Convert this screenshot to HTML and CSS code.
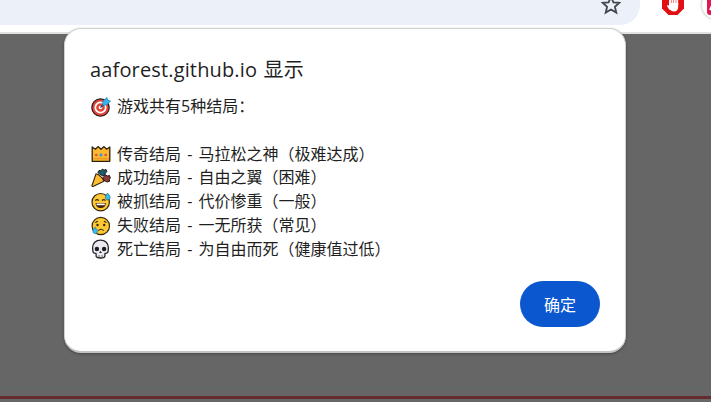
FILE: index.html
```html
<!DOCTYPE html>
<html lang="zh-CN">

<head>
    <meta charset="UTF-8">
    <meta name="viewport" content="width=device-width, initial-scale=1.0">
    <title>aaforest.github.io</title>
    <link rel="stylesheet" href="styles.css">
</head>

<body>
    <div class="toolbar">
        <div class="address-bar">
            <svg class="star" viewBox="0 0 20 20">
                <path d="M10 1.800l2.400 5.500 6 .5-4.500 3.900 1.400 5.900L10 14.500l-5.300 3.100 1.400-5.900L1.600 7.800l6-.5z" />
            </svg>
        </div>
        <svg class="ext-stop" viewBox="0 0 22 22">
            <path fill="#e20f12" d="M6.500 0h9L22 6.500v9L15.500 22h-9L0 15.500v-9z" />
            <path fill="none" stroke="#fff" stroke-width="1.900" stroke-linecap="round" d="M8 12V6M10.400 11V4.500M12.800 11V5M15.200 12V7M6 13l2 3" />
            <path fill="#fff" d="M7 10h9.200v4c0 2.500-1.500 4.500-4.200 4.500-2.200 0-3.500-1-5-3.500z" />
        </svg>
        <div class="ext-badge">
            <svg viewBox="0 0 20 20">
                <rect width="20" height="20" rx="3" fill="#e3174f" />
                <path d="M3 15L8 4l5 11M5 11h6" fill="none" stroke="#fff" stroke-width="2" />
            </svg>
        </div>
    </div>

    <div class="page">
        <div class="page-edge"></div>
        <div class="page-line"></div>
    </div>

    <div class="dialog">
        <h1>aaforest.github.io <span>显示</span></h1>
        <div class="message">
            <p>
                <svg viewBox="0 0 20 20">
                    <circle cx="9.500" cy="10.500" r="8.700" fill="#e0443a" stroke="#2b1a18" stroke-width="1.200" />
                    <circle cx="9.500" cy="10.500" r="5.200" fill="none" stroke="#fff" stroke-width="1.700" />
                    <circle cx="9.500" cy="10.500" r="1.800" fill="#fff" />
                    <path d="M9.500 10.500l5-5" stroke="#1d3c50" stroke-width="1.200" />
                    <path d="M11.500 8.500l.3-4.500L16 .6l.8 2.400 2.700.9-3.500 4z" fill="#35b4ee" stroke="#186c98" stroke-width=".6" />
                </svg>
                <span>游戏共有5种结局：</span>
            </p>
            <p></p>
            <p>
                <svg viewBox="0 0 20 20">
                    <path d="M1.200 17.300V3l3.200 2.200L7 2.600l3 2.600 3-2.600 2.600 2.600L18.800 3v14.300z" fill="#fcb82e" stroke="#2e210d" stroke-width="1.300" stroke-linejoin="round" />
                    <path d="M2 14.800h16" stroke="#e58b20" stroke-width="1" />
                    <circle cx="5.300" cy="11" r="1.300" fill="#e8483f" />
                    <path d="M10 8.900l1.800 2.100-1.800 2.100L8.200 11z" fill="#2f9ce0" />
                    <circle cx="14.700" cy="11" r="1.300" fill="#e8483f" />
                </svg>
                <span>传奇结局 - 马拉松之神（极难达成）</span>
            </p>
            <p>
                <svg viewBox="0 0 20 20">
                    <path d="M8.500 6l-1.700-1.500L8 2.500l2 .3L11.500 1l1.500 1.200 2-.7.800 2.200-1.500 1.500L14 7l-2.500.8z" fill="#235d69" stroke="#151a1c" stroke-width="1" />
                    <path d="M12 9.500l2.500-2.500 2 1 2-.5.800 2.500-1 1.300.3 1.900-2.500.8-3.500-2z" fill="#913a38" stroke="#1d1213" stroke-width="1" />
                    <path d="M5 5.800c3 .8 6.900 4 8 7.500L2 18.400c-.7.300-1.200-.2-1-.9z" fill="#fdbd32" stroke="#35230c" stroke-width="1.100" />
                </svg>
                <span>成功结局 - 自由之翼（困难）</span>
            </p>
            <p>
                <svg viewBox="0 0 20 20">
                    <circle cx="9.700" cy="10.200" r="8.700" fill="#fdc834" stroke="#35270f" stroke-width="1.200" />
                    <path d="M4.300 8.700q1.800-2 3.500 0M11 8.700q1.800-2 3.500 0" fill="none" stroke="#39270e" stroke-width="1.200" />
                    <path d="M4.600 11h10.200c0 3-2 5-5.100 5s-5.100-2-5.100-5z" fill="#41240f" />
                    <path d="M5.600 11.500h8.200v1.700H5.600z" fill="#fff" />
                    <path d="M16.500 1c1.500 2 2.600 3.200 2.600 4.500 0 3-4.700 3-4.700 0 0-1.300 1-2.700 2.100-4.500z" fill="#36bdf4" stroke="#1a6c91" stroke-width=".7" />
                </svg>
                <span>被抓结局 - 代价惨重（一般）</span>
            </p>
            <p>
                <svg viewBox="0 0 20 20">
                    <circle cx="9.800" cy="10" r="8.700" fill="#fdc834" stroke="#35270f" stroke-width="1.200" />
                    <circle cx="6.500" cy="9" r="1.200" fill="#34240f" />
                    <circle cx="13.200" cy="9" r="1.200" fill="#34240f" />
                    <path d="M4.300 6.500l2.500-1.300M15.400 6.500l-2.500-1.300M7.200 14.700q2.700-2.800 5.400 0" fill="none" stroke="#34240f" stroke-width="1.100" />
                    <path d="M4.200 11c1.300 1.900 2.200 3 2.200 4.400 0 3-4.500 3-4.500 0 0-1.400 1-2.600 2.300-4.400z" fill="#36bdf4" stroke="#1a6c91" stroke-width=".6" />
                </svg>
                <span>失败结局 - 一无所获（常见）</span>
            </p>
            <p>
                <svg viewBox="0 0 20 20">
                    <path d="M9.500 1.200c4.800 0 7.900 3.200 7.900 7.500 0 2-.3 3.500-.5 4.500-.2 1-1.700 1.300-3 1.500v2.300c0 1.200-1.500 2-4.400 2s-4.400-.8-4.400-2v-2.300c-1.300-.2-2.800-.5-3-1.500-.2-1-.5-2.500-.5-4.500 0-4.300 3.100-7.500 7.900-7.500z" fill="#eceaf0" stroke="#242329" stroke-width="1.300" />
                    <circle cx="5.900" cy="10" r="2.200" fill="#1d1c22" />
                    <circle cx="13.100" cy="10" r="2.200" fill="#1d1c22" />
                    <path d="M9.500 11.800l1.400 2.200H8.100z" fill="#1d1c22" />
                    <path d="M8 16v2M11 16v2" stroke="#55535c" stroke-width=".8" />
                </svg>
                <span>死亡结局 - 为自由而死（健康值过低）</span>
            </p>
        </div>
        <div class="buttons">
            <button class="ok-button">确定</button>
        </div>
    </div>
</body>

</html>
```
FILE: styles.css
```css
* {
    box-sizing: border-box;
}

body {
    margin: 0;
    height: 402px;
    display: flex;
    flex-direction: column;
    overflow: hidden;
    background-color: #fff;
    font-family: "Open Sans", "Noto Sans CJK SC", sans-serif;
    color: #1f1f1f;
}

.toolbar {
    flex: none;
    display: flex;
    height: 34px;
    border-bottom: 2px solid #dfe2e1;
    overflow: hidden;
}

.address-bar {
    flex: none;
    display: flex;
    justify-content: flex-end;
    width: 640px;
    height: 25px;
    padding-right: 19px;
    background-color: #ebf0f9;
    border-bottom-right-radius: 20px;
}

.star {
    width: 20px;
    height: 20px;
    margin-top: -5px;
    fill: none;
    stroke: #44474b;
    stroke-width: 1.8;
}

.ext-stop {
    flex: none;
    width: 22px;
    height: 22px;
    margin: -7px 0 0 22px;
}

.ext-badge {
    flex: none;
    width: 28px;
    height: 28px;
    margin: -9px 0 0 18px;
    padding: 4px 5px;
    border-radius: 50%;
    background-color: #fff;
    box-shadow: 0 0 3px rgba(0, 0, 0, 0.4);
}

.ext-badge svg {
    display: block;
    width: 20px;
    height: 20px;
}

.page {
    flex: 1;
    display: flex;
    flex-direction: column;
    justify-content: flex-end;
    padding-bottom: 3px;
    background-color: #666;
}

.page-edge {
    height: 2px;
    margin-bottom: 6px;
    background-color: #60685f;
    background-color: #616966;
}

.page-line {
    height: 3px;
    background-color: #652c30;
}

/* alert box, lies over the toolbar and the page */
.dialog {
    position: absolute;
    top: 28px;
    left: 64px;
    width: 562px;
    height: 325px;
    padding: 26px 25px 24px 25px;
    display: flex;
    flex-direction: column;
    background-color: #fff;
    border: 1px solid #d0d2d2;
    border-bottom: 2px solid #c4c4c4;
    border-radius: 17px;
    box-shadow: 0 1px 3px rgba(0, 0, 0, 0.3);
}

h1 {
    margin: 0;
    height: 30px;
    font-size: 20px;
    line-height: 30px;
    font-weight: 400;
    letter-spacing: 0.15px;
    word-spacing: 1px;
    white-space: nowrap;
}

.message {
    margin-top: 10px;
    padding-left: 1px;
    font-size: 16px;
    word-spacing: 2px;
}

.message p {
    display: flex;
    align-items: center;
    gap: 6px;
    margin: 0;
    height: 23.75px;
    line-height: 23.75px;
    white-space: nowrap;
}

.message svg {
    width: 20px;
    height: 20px;
}

.buttons {
    display: flex;
    justify-content: flex-end;
    margin-top: auto;
}

.ok-button {
    width: 80px;
    height: 46px;
    border: none;
    border-radius: 23px;
    background-color: #0b57d0;
    color: #fff;
    font-family: inherit;
    font-size: 16px;
}
```
